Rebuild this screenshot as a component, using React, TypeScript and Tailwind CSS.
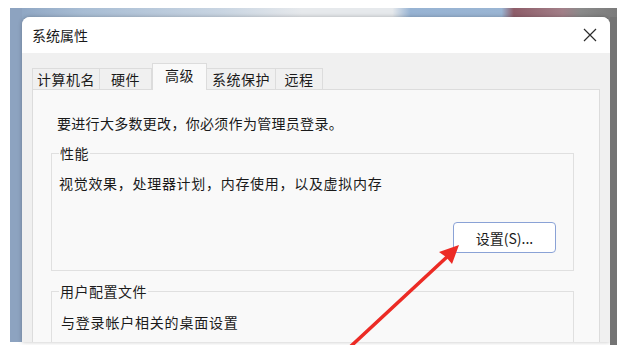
import React from 'react';

const font = 'font-["Segoe_UI","Noto_Sans_CJK_SC",sans-serif] [text-spacing-trim:space-all]';

const tabs = [
  { label: '计算机名', w: 'w-[68px]' },
  { label: '硬件', w: 'w-[53px]' },
  { label: '高级', w: 'w-[55px]', active: true },
  { label: '系统保护', w: 'w-[70px]' },
  { label: '远程', w: 'w-[48px]' },
];

const GroupBox: React.FC<{ title: string; className?: string; children: React.ReactNode }> = ({
  title,
  className = '',
  children,
}) => (
  <fieldset className={`ml-[18px] mr-[25px] border border-[#e0e0e0] ${className}`}>
    <legend className="ml-[7px] px-px text-[14px] leading-[20px] tracking-[0.5px] text-[#1c1c1c]">{title}</legend>
    {children}
  </fieldset>
);

export default function App() {
  return (
    <div lang="zh-CN" className={`relative h-[345px] w-[627px] overflow-hidden bg-white ${font}`}>
      {/* desktop behind the dialog */}
      <div className="ml-[10px] mr-[10px] mt-[8px] h-[334px] bg-[linear-gradient(90deg,#8ba3c1_0%,#a8bdd4_12%,#c9d5e2_35%,#e6e9ec_48%,#e6e9ec_63%,#97b3d3_66%,#9ab5d3_81%,#8e5d69_83%,#a27f88_91%,#8a8a8a_94%,#7b7b7b_100%)]">
        <div className="flex h-full">
          <div className="h-full w-[12px] bg-[#8da3c0]" />
          <div className="mt-[9px] flex h-[325px] w-[588px] flex-col overflow-hidden rounded-t-[8px] bg-[#f0f0f0] shadow-[0_0_4px_rgba(0,0,0,0.25)]">
            {/* title bar */}
            <div className="flex h-[36px] shrink-0 items-center justify-between bg-white pl-[10px] pr-[12px]">
              <span className="text-[14px] leading-[20px] text-[#1a1a1a]">系统属性</span>
              <svg width="14" height="14" viewBox="0 0 14 14" className="mr-[1px]">
                <path d="M1 1 L13 13 M13 1 L1 13" stroke="#2b2b2b" strokeWidth="1.2" fill="none" />
              </svg>
            </div>

            {/* tabs */}
            <div className="mt-[10px] flex h-[26px] shrink-0 items-end pl-[10px]">
              {tabs.map((t) =>
                t.active ? (
                  <div
                    key={t.label}
                    className={`${t.w} relative z-10 -mb-px flex h-[27px] items-start justify-center border border-b-0 border-[#dcdcdc] bg-[#f9f9f9] pt-[1px] text-[14px] leading-[20px] tracking-[0.5px] text-[#1a1a1a]`}
                  >
                    {t.label}
                  </div>
                ) : (
                  <div
                    key={t.label}
                    className={`${t.w} -ml-px flex h-[21px] items-center justify-center border border-b-0 border-[#dcdcdc] bg-[#f0f0f0] text-[14px] leading-[20px] tracking-[0.5px] text-[#1a1a1a] first:ml-0`}
                  >
                    {t.label}
                  </div>
                ),
              )}
            </div>

            {/* panel */}
            <div className="ml-[10px] mr-[10px] flex-1 border border-b-0 border-[#dcdcdc] bg-[#f9f9f9] pt-[23px]">
              <p className="pl-[24px] text-[14px] leading-[20px] tracking-[0.3px] text-[#1a1a1a]">
                要进行大多数更改，你必须作为管理员登录。
              </p>

              <GroupBox title="性能" className="mt-[10px] pb-[17px] pt-[10px]">
                <p className="pl-[7px] text-[14px] leading-[20px] tracking-[0.7px] text-[#1a1a1a]">
                  视觉效果，处理器计划，内存使用，以及虚拟内存
                </p>
                <div className="mt-[29px] flex justify-end pr-[17px]">
                  <button className="flex h-[31px] w-[103px] items-center justify-center rounded-[4px] border border-[#8aa2d6] bg-white text-[14px] leading-[20px] text-[#1a1a1a]">
                    设置(S)...
                  </button>
                </div>
              </GroupBox>

              <GroupBox title="用户配置文件" className="mt-[10px] pb-[20px] pt-[11px]">
                <p className="pl-[9px] text-[14px] leading-[20px] tracking-[0.8px] text-[#1a1a1a]">
                  与登录帐户相关的桌面设置
                </p>
              </GroupBox>
            </div>
          </div>
          <div className="mt-[9px] h-full w-[7px] bg-[#747474]" />
        </div>
      </div>

      {/* red annotation arrow */}
      <svg className="pointer-events-none absolute left-0 top-0" width="627" height="345" viewBox="0 0 627 345">
        <line x1="350" y1="347" x2="448" y2="256" stroke="#ec2b25" strokeWidth="3.5" strokeLinecap="round" />
        <polygon points="459,245 452,264 446,257 439,252" fill="#ec2b25" />
      </svg>
    </div>
  );
}
